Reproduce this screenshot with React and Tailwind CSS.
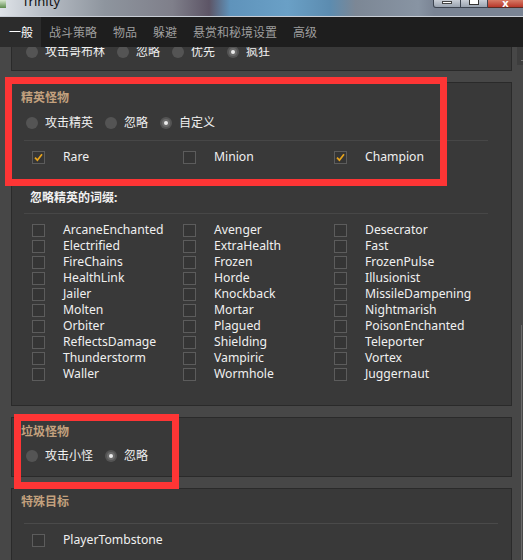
import React from "react";

const tabs = ["一般", "战斗策略", "物品", "躲避", "悬赏和秘境设置", "高级"];

const affixes = [
  ["ArcaneEnchanted", "Avenger", "Desecrator"],
  ["Electrified", "ExtraHealth", "Fast"],
  ["FireChains", "Frozen", "FrozenPulse"],
  ["HealthLink", "Horde", "Illusionist"],
  ["Jailer", "Knockback", "MissileDampening"],
  ["Molten", "Mortar", "Nightmarish"],
  ["Orbiter", "Plagued", "PoisonEnchanted"],
  ["ReflectsDamage", "Shielding", "Teleporter"],
  ["Thunderstorm", "Vampiric", "Vortex"],
  ["Waller", "Wormhole", "Juggernaut"],
];

const cjk = "font-['Noto_Sans','Noto_Sans_CJK_SC',sans-serif]";

function Radio({ label, checked }) {
  return (
    <div className="flex items-center h-4 mr-[12px]">
      <div className="w-[12px] h-[12px] rounded-full bg-[#545454] flex items-center justify-center">
        {checked && (
          <div className="w-[8px] h-[8px] rounded-full bg-[#6b6b6b] flex items-center justify-center">
            <div className="w-[4px] h-[4px] rounded-full bg-[#ececec]" />
          </div>
        )}
      </div>
      <span className="ml-[7px] text-[12px] leading-4 text-[#f0f0f0]">{label}</span>
    </div>
  );
}

function RadioRow({ items, selected }) {
  return (
    <div className="flex pl-[5px]">
      {items.map((t) => (
        <Radio key={t} label={t} checked={t === selected} />
      ))}
    </div>
  );
}

function Checkbox({ label, checked }) {
  return (
    <div className="flex items-center h-4">
      <div className="w-[13px] h-[13px] border border-[#5c5c5c] bg-[#353535] flex items-center justify-center">
        {checked && (
          <svg width="9" height="9" viewBox="0 0 9 9">
            <path d="M1 4.6 L3.4 7.2 L8 1.2" fill="none" stroke="#e8a41c" strokeWidth="1.7" />
          </svg>
        )}
      </div>
      <span className="ml-[18px] text-[12.2px] leading-4 text-[#f0f0f0]">{label}</span>
    </div>
  );
}

function Box({ className = "", children }) {
  return (
    <div className={"border border-[#2a2a2a] bg-[#393939] pl-[9px] flex flex-col shrink-0 " + className}>
      {children}
    </div>
  );
}

function Title({ children, className = "" }) {
  return <div className={"text-[12px] leading-4 font-bold text-[#c3a17e] " + className}>{children}</div>;
}

function TitleBar() {
  return (
    <div className="h-[17px] shrink-0 flex bg-[linear-gradient(90deg,#dfe3e8_0%,#b9bfc7_8%,#8e959e_20%,#7f7f8a_33%,#5d5566_40%,#5f93bb_44%,#6aa0c6_55%,#5c8cb0_63%,#7c8795_68%,#8894a3_80%,#7a8494_83%)] border-b border-[#c9ced6] overflow-hidden">
      <div className="w-[6px] h-[8px] bg-[linear-gradient(180deg,#d8e8d0,#5c8a4c)]" />
      <span className="ml-[16px] -mt-[7px] text-[13px] leading-4 text-[#111] font-['Noto_Sans',sans-serif]">Trinity</span>
      <div className="flex-1" />
      <div className="flex h-[8px]">
        <div className="w-[28px] rounded-bl-[3px] border border-t-0 border-[#3d4450] bg-[linear-gradient(180deg,#c9ced6,#9aa3b0)] flex justify-center">
          <div className="w-[10px] h-[3px] mt-[1px] bg-white border border-[#444]" />
        </div>
        <div className="w-[27px] border-b border-r border-[#3d4450] bg-[linear-gradient(180deg,#c9ced6,#9aa3b0)] flex justify-center">
          <div className="w-[10px] h-[5px] border-x border-b border-[#333] bg-white" />
        </div>
        <div className="w-[35px] border-b border-[#5a2a22] bg-[linear-gradient(180deg,#d77a66,#b8382a)] flex justify-center">
          <span className="text-[11px] leading-[6px] font-bold text-white">x</span>
        </div>
      </div>
    </div>
  );
}

export default function App() {
  return (
    <div className={"w-[523px] h-[560px] overflow-hidden bg-[#474747] flex flex-col relative " + cjk}>
      <TitleBar />
      <div className="h-[30px] shrink-0 bg-[#1e1e1e] flex items-stretch">
        {tabs.map((t, i) => (
          <div
            key={t}
            className={
              "flex items-center pt-[2px] px-2 text-[12px] " +
              (i === 0 ? "bg-[#2c2c2c] text-white w-[41px] pl-[9px]" : "text-[#9d9d9d]")
            }
          >
            {t}
          </div>
        ))}
      </div>

      <div className="flex flex-1 min-h-0">
        <div className="flex-1 overflow-hidden pl-[11px] pr-[5px]">
          <div className="flex flex-col gap-[11px] -mt-[25px]">
            <Box className="h-[49px] pt-[21px]">
              <RadioRow items={["攻击哥布林", "忽略", "优先", "疯狂"]} selected="疯狂" />
            </Box>

            <Box className="h-[324px] pt-[7px]">
              <Title>精英怪物</Title>
              <div className="mt-[9px]">
                <RadioRow items={["攻击精英", "忽略", "自定义"]} selected="自定义" />
              </div>
              <div className="mt-[9px] ml-[3px] w-[464px] h-px bg-[#474747]" />
              <div className="mt-[8px] pl-[11px] grid grid-cols-[151px_151px_151px]">
                <Checkbox label="Rare" checked />
                <Checkbox label="Minion" />
                <Checkbox label="Champion" checked />
              </div>
              <div className="mt-[25px] pl-[9px] text-[12px] leading-4 font-bold text-[#f0f0f0]">忽略精英的词缀:</div>
              <div className="mt-[7px] ml-[3px] w-[464px] h-px bg-[#474747]" />
              <div className="mt-[8px] pl-[11px] grid grid-cols-[151px_151px_151px]">
                {affixes.flat().map((a) => (
                  <Checkbox key={a} label={a} />
                ))}
              </div>
            </Box>

            <Box className="h-[60px] pt-[6px]">
              <Title>垃圾怪物</Title>
              <div className="mt-[8px]">
                <RadioRow items={["攻击小怪", "忽略"]} selected="忽略" />
              </div>
            </Box>

            <Box className="h-[100px] pt-[5px]">
              <Title>特殊目标</Title>
              <div className="mt-[13px] ml-[3px] w-[474px] h-px bg-[#4a4a4a]" />
              <div className="mt-[8px] pl-[11px]">
                <Checkbox label="PlayerTombstone" />
              </div>
            </Box>
          </div>
        </div>

        <div className="w-[6px] flex flex-col">
          <div className="h-[18px] bg-[#3d3d3d] flex items-end justify-end pb-[4px]">
            <div className="w-[2px] h-[1px] bg-[#777]" />
          </div>
          <div className="h-[260px]" />
          <div className="flex-1 ml-[4px] border-l border-[#6a6a6a]" />
        </div>
      </div>

      <div className="absolute left-[5px] top-[77px] w-[442px] h-[109px] border-[7px] border-[#fe3535]" />
      <div className="absolute left-[14px] top-[414px] w-[165px] h-[75px] border-[7px] border-[#fe3535]" />
    </div>
  );
}
